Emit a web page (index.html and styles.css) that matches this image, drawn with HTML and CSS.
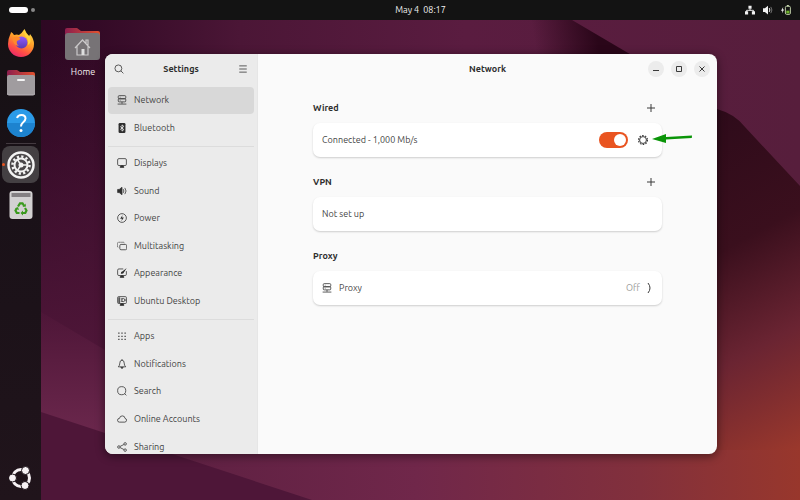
FILE: index.html
```html
<!DOCTYPE html>
<html lang="en">
<head>
    <meta charset="UTF-8">
    <meta name="viewport" content="width=device-width, initial-scale=1.0">
    <title>Settings</title>
    <link rel="stylesheet" href="styles.css">
</head>
<body>

    <!-- wallpaper -->
    <svg class="wallpaper" viewBox="0 0 800 500" preserveAspectRatio="none" aria-hidden="true">
        <defs>
            <linearGradient id="base" x1="0" y1="0" x2="1" y2="0">
                <stop offset="0" stop-color="#2a0620"/>
                <stop offset=".12" stop-color="#330a26"/>
                <stop offset=".3" stop-color="#4b1636"/>
                <stop offset=".58" stop-color="#5a1c40"/>
                <stop offset="1" stop-color="#571e3c"/>
            </linearGradient>
            <linearGradient id="left" x1="0" y1="0" x2="0" y2="1">
                <stop offset=".1" stop-color="#4e1638" stop-opacity="0"/>
                <stop offset=".7" stop-color="#4e1638"/>
            </linearGradient>
            <linearGradient id="fold" x1="0" y1="0" x2="0" y2="1">
                <stop offset="0" stop-color="#561a3d" stop-opacity=".3"/>
                <stop offset=".4" stop-color="#5a1d40"/>
                <stop offset="1" stop-color="#6a274c"/>
            </linearGradient>
            <linearGradient id="bottom" x1="0" y1="0" x2="1" y2="0">
                <stop offset="0" stop-color="#5d2042"/>
                <stop offset=".4" stop-color="#70274a"/>
                <stop offset=".75" stop-color="#82303c"/>
                <stop offset="1" stop-color="#98372c"/>
            </linearGradient>
            <linearGradient id="right" x1="0" y1="0" x2=".15" y2="1">
                <stop offset="0" stop-color="#2c0a1a"/>
                <stop offset=".42" stop-color="#3a0f1d"/>
                <stop offset=".7" stop-color="#6a2432"/>
                <stop offset="1" stop-color="#9a382c"/>
            </linearGradient>
            <linearGradient id="shade" gradientUnits="userSpaceOnUse" x1="535" y1="45" x2="597" y2="35">
                <stop offset="0" stop-color="#2a0619" stop-opacity="0"/>
                <stop offset="1" stop-color="#2a0619"/>
            </linearGradient>
        </defs>
        <rect width="800" height="500" fill="url(#base)"/>
        <rect width="300" height="500" fill="url(#left)"/>
        <path d="M41 312L105 350V433L41 412Z" fill="url(#fold)"/>
        <path d="M520 20H572L640 60H520Z" fill="url(#shade)"/>
        <path d="M690 95L717 109Q735 114 745 127L800 186V500H690Z" fill="url(#right)"/>
        <path d="M160 450L312 500H800V450Z" fill="url(#bottom)"/>
    </svg>

    <!-- top bar -->
    <header class="topbar">
        <div class="workspaces"><span class="pill"></span><span class="dot"></span></div>
        <time class="clock">May 4&nbsp; 08:17</time>
        <div class="tray">
            <svg viewBox="0 0 16 16"><path d="M5.500 1h5v5h-5zM0 10h5v5H0zM11 10h5v5h-5z" fill="currentColor"/><path d="M8 6v3M2.500 11V8.500h11V11" fill="none" stroke="currentColor" stroke-width="1.500"/></svg>
            <svg viewBox="0 0 16 16"><path d="M0 5h3l5-4v14l-5-4H0z" fill="currentColor"/><path d="M10 5q2 3 0 6" fill="none" stroke="currentColor" stroke-width="1.600"/><path d="M12.500 3q3.500 5 0 10" fill="none" stroke="#777" stroke-width="1.500"/></svg>
            <svg viewBox="0 0 16 16"><path d="M3.500 3L0 9h2.200L1.500 13 5 7H3z" fill="currentColor"/><rect x="7" y="2" width="8" height="13" rx="2" fill="none" stroke="#c7d8ae" stroke-width="1.500"/><path d="M9.500 0h3v2h-3z" fill="#c7d8ae"/><path d="M8.500 9h5v4.500h-5z" fill="#6fb52c"/></svg>
        </div>
    </header>

    <!-- dock -->
    <nav class="dock" aria-label="Dock">
        <button class="dock-item" aria-label="Firefox">
            <svg viewBox="0 0 28 28">
                <defs>
                    <linearGradient id="ff" x1=".8" y1="0" x2=".3" y2="1"><stop offset="0" stop-color="#ffe24a"/><stop offset=".45" stop-color="#ff9a28"/><stop offset=".75" stop-color="#ff4e45"/><stop offset="1" stop-color="#e9286c"/></linearGradient>
                    <linearGradient id="ffb" x1="0" y1="0" x2="0" y2="1"><stop offset="0" stop-color="#9059ff"/><stop offset="1" stop-color="#5b3bb0"/></linearGradient>
                </defs>
                <path d="M3 6q1-2 1-3 2 1 3 3 3-1 5 0Q15 4 17.500 0 19 4 22 7q1-1 1-2 4 5 4 10A13 13 0 0 1 1 15Q1 10 3 6z" fill="url(#ff)"/>
                <circle cx="14.500" cy="13.500" r="6" fill="url(#ffb)"/>
                <path d="M5 9q5-3 8 0 1 1-1 2l-2 1q-1 3 2 5-6-1-7-8z" fill="#ff8a2b"/>
                <path d="M17 1q0 5 3 8 2 3 1 7 4-3 2-8-4-3-6-7z" fill="#ffd43a"/>
            </svg>
        </button>
        <button class="dock-item" aria-label="Files">
            <svg viewBox="0 0 28 28">
                <defs><linearGradient id="fold-top" x1="0" y1="0" x2="1" y2="0"><stop offset="0" stop-color="#8c1e4e"/><stop offset="1" stop-color="#e2512e"/></linearGradient></defs>
                <path d="M0 3q0-2 2-2h8l3 2h13q2 0 2 2v8H0z" fill="url(#fold-top)"/>
                <rect y="6" width="28" height="20" rx="2" fill="#a09c9f"/>
                <path d="M0 24q0 2 2 2h24q2 0 2-2" fill="none" stroke="#bbb6ba"/>
                <rect x="10" y="10" width="8" height="2" rx="1" fill="#f5f5f5"/>
            </svg>
        </button>
        <button class="dock-item" aria-label="Help">
            <svg viewBox="0 0 28 28">
                <circle cx="14" cy="14" r="14" fill="#2b9be8"/>
                <path d="M0 14a14 14 0 0 0 28 0z" fill="#1d83cf"/>
                <path d="M10 9q1-3 4.500-3 4 0 4 3.500 0 2-2.500 4-2 1.500-2 4" fill="none" stroke="#fff" stroke-width="2"/>
                <circle cx="14" cy="21.500" r="1.500" fill="#fff"/>
            </svg>
        </button>
        <hr class="dock-line">
        <button class="dock-item running" aria-label="Settings">
            <svg viewBox="0 0 28 28">
                <circle cx="14" cy="14" r="12.500" fill="#4b484a" stroke="#f3f3f3" stroke-width="2.500"/>
                <circle cx="14" cy="14" r="8.500" fill="none" stroke="#f3f3f3" stroke-width="2.500" stroke-dasharray="2.200 2.250"/>
                <circle cx="14" cy="14" r="6.500" fill="none" stroke="#f3f3f3" stroke-width="2"/>
                <path d="M14 14h7M14 14l-4-6M14 14l-4 6" stroke="#f3f3f3" stroke-width="1.500"/>
                <circle cx="14" cy="14" r="2.500" fill="#f3f3f3"/>
            </svg>
        </button>
        <button class="dock-item" aria-label="Trash">
            <svg viewBox="0 0 28 28">
                <rect x="2.500" width="23" height="28" rx="3" fill="#d3d1d2"/>
                <path d="M4.500 2h19v4h-19z" fill="#848083"/>
                <g fill="none" stroke="#3a9a1e" stroke-width="2.200">
                    <path d="M11 15.500l2-3.200h2.500l1.500 2.500"/>
                    <path d="M18 17l1.500 2.500-1.200 2.500H15.500"/>
                    <path d="M12.500 22H9.800l-1.300-2.500L10 17"/>
                </g>
                <path d="M15.500 16l3.500-.5-.5-3zM16 19.500L13.500 22l2.500 2.500zM8 17.500l3-1.500 1 3z" fill="#3a9a1e"/>
            </svg>
        </button>
        <button class="dock-item apps" aria-label="Show apps">
            <svg viewBox="0 0 24 24">
                <circle cx="12" cy="12" r="8.500" fill="none" stroke="#f7f2f5" stroke-width="3"/>
                <g fill="#f7f2f5" stroke="#1f151b" stroke-width="1"><circle cx="3.500" cy="12" r="4"/><circle cx="16.500" cy="4.500" r="4"/><circle cx="16" cy="19.500" r="4"/></g>
            </svg>
        </button>
    </nav>

    <main class="desktop">
        <a class="shortcut" href="#home">
            <svg viewBox="0 0 36 34">
                <path d="M0 3q0-2 2-2h10l4 3h17q2 0 2 2v8H0z" fill="url(#fold-top)"/>
                <rect y="6" width="35" height="27" rx="3" fill="#777376"/>
                <path d="M10 21l7.500-8 7.500 8M12 19v9h11v-9M21 16v-3h2v5" fill="none" stroke="#cbc9ca" stroke-width="1.200"/>
                <path d="M16.500 22h3v6h-3z" fill="#dedede"/>
            </svg>
            <span>Home</span>
        </a>

        <!-- settings window -->
        <div class="window">
            <aside class="sidebar">
                <div class="sidebar-head">
                    <button class="icon-btn" aria-label="Search settings"><svg viewBox="0 0 16 16"><circle cx="7" cy="7" r="5.500"/><path d="M11 11l4 4"/></svg></button>
                    <h1>Settings</h1>
                    <button class="icon-btn" aria-label="Menu"><svg viewBox="0 0 16 16"><path d="M2 3h12M2 8h12M2 13h12"/></svg></button>
                </div>
                <nav aria-label="Settings panels">
                    <div class="group two">
                        <a class="item active" href="#network"><svg viewBox="0 0 16 16"><rect x="2" y="1" width="12" height="5" rx="1.500"/><rect x="2" y="6" width="12" height="5" rx="1.500"/><path d="M4.500 3.500h1M4.500 8.500h1M8 11v3M1 14.500h14"/></svg>Network</a>
                        <a class="item" href="#bluetooth"><svg viewBox="0 0 16 16"><rect x="2.500" y="0" width="11" height="16" rx="2" fill="#2e2e2e" stroke="none"/><path d="M5 5.500l6 5-3 2.500V3l3 2.500-6 5" stroke="#fff" stroke-width="1.200"/></svg>Bluetooth</a>
                    </div>
                    <div class="group six">
                        <a class="item" href="#displays"><svg viewBox="0 0 16 16"><rect x="1" y="1" width="14" height="11" rx="2"/><path d="M5 15q0-3 3-3t3 3z" fill="#2e2e2e"/></svg>Displays</a>
                        <a class="item" href="#sound"><svg viewBox="0 0 16 16"><path d="M1 5.500h2.500L8 2v12l-4.500-3.500H1z" fill="#2e2e2e"/><path d="M10 5q2 3 0 6M12.500 3q4 5 0 10"/></svg>Sound</a>
                        <a class="item" href="#power"><svg viewBox="0 0 16 16"><circle cx="8" cy="8" r="7"/><path d="M9 3L5 9h3l-1 4 4-6H8z" fill="#2e2e2e" stroke="none"/></svg>Power</a>
                        <a class="item" href="#multitasking"><svg viewBox="0 0 16 16"><rect x="4.500" y="5.500" width="11" height="8.500" rx="2"/><path d="M2 10Q.7 10 .7 8V4q0-2 2-2h7q2 0 2 1.500" stroke-dasharray="2 1"/></svg>Multitasking</a>
                        <a class="item" href="#appearance"><svg viewBox="0 0 16 16"><path d="M10 1.500H3q-2 0-2 2V10q0 2 2 2h10q2 0 2-2V5"/><path d="M5 15q0-3 3-3t3 3z" fill="#2e2e2e"/><path d="M15.500 0L9 5q-3 0-3 4 4 1 5-2z" fill="#2e2e2e" stroke="none"/></svg>Appearance</a>
                        <a class="item" href="#ubuntu-desktop"><svg viewBox="0 0 16 16"><rect x="1" y="1" width="14" height="11" rx="1.500"/><path d="M2 2h3v9H2z" fill="#555" stroke="none"/><path d="M5 15q0-3 3-3t3 3z" fill="#2e2e2e"/><circle cx="10" cy="6.500" r="2.500"/><path d="M6 4.500h3M6 8.500h3M12.500 6.500H15"/></svg>Ubuntu Desktop</a>
                    </div>
                    <div class="group five">
                        <a class="item" href="#apps"><svg viewBox="0 0 16 16"><path d="M2 3.500h2M7 3.500h2M12 3.500h2M2 8.500h2M7 8.500h2M12 8.500h2M2 13.500h2M7 13.500h2M12 13.500h2" stroke-width="2"/></svg>Apps</a>
                        <a class="item" href="#notifications"><svg viewBox="0 0 16 16"><path d="M2 12.500q2.500-2 2.500-6Q4.500 2 8 2t3.500 4.500q0 4 2.500 6zM8 0v2"/><path d="M6 13.500q2 3 4 0z" fill="#2e2e2e"/></svg>Notifications</a>
                        <a class="item" href="#search"><svg viewBox="0 0 16 16"><circle cx="7.500" cy="7.500" r="6.500"/><path d="M12 12l3 3"/></svg>Search</a>
                        <a class="item" href="#online-accounts"><svg viewBox="0 0 16 16"><path d="M4 13Q.8 13 .8 10T4 7q.5-4 4.500-4t4.300 4q2.500.5 2.500 3t-2.800 3z"/></svg>Online Accounts</a>
                        <a class="item" href="#sharing"><svg viewBox="0 0 16 16"><circle cx="3" cy="8" r="2"/><circle cx="13" cy="3" r="2"/><circle cx="13" cy="13" r="2"/><path d="M5 7l6-3M5 9l6 3"/></svg>Sharing</a>
                    </div>
                </nav>
            </aside>

            <section class="panel">
                <div class="panel-head">
                    <h1>Network</h1>
                    <div class="controls">
                        <button aria-label="Minimize"><svg viewBox="0 0 8 8"><path d="M1 5.500h6"/></svg></button>
                        <button aria-label="Maximize"><svg viewBox="0 0 8 8"><path d="M1.500 1.500h5v5h-5z"/></svg></button>
                        <button aria-label="Close"><svg viewBox="0 0 8 8"><path d="M1.500 1.500l5 5M6.500 1.500l-5 5"/></svg></button>
                    </div>
                </div>

                <div class="content">
                    <div class="section-head">
                        <h2>Wired</h2>
                        <button class="add" aria-label="Add wired connection"><svg viewBox="0 0 8 8"><path d="M4 0v8M0 4h8"/></svg></button>
                    </div>
                    <div class="card">
                        <label for="wired">Connected - 1,000 Mb/s</label>
                        <input class="switch" type="checkbox" id="wired" checked>
                        <button class="gear" aria-label="Wired options">
                            <svg viewBox="0 0 16 16"><circle cx="8" cy="8" r="5.500" stroke-width="1.600"/><circle cx="8" cy="8" r="7.200" stroke-width="1.800" stroke-dasharray="2.500 2.020"/></svg>
                            <svg class="arrow" viewBox="0 0 40 10" aria-hidden="true"><path d="M0 6L14 1v3l26-1.500-.2 2.500L14 6.500V10z" fill="#0a9508" stroke="none"/></svg>
                        </button>
                    </div>

                    <div class="section-head">
                        <h2>VPN</h2>
                        <button class="add" aria-label="Add VPN"><svg viewBox="0 0 8 8"><path d="M4 0v8M0 4h8"/></svg></button>
                    </div>
                    <div class="card">Not set up</div>

                    <div class="section-head">
                        <h2>Proxy</h2>
                    </div>
                    <button class="card">
                        <svg viewBox="0 0 16 16"><rect x="2" y="1" width="12" height="5" rx="1.500"/><rect x="2" y="6" width="12" height="5" rx="1.500"/><path d="M4.500 3.500h1M4.500 8.500h1M8 11v3M1 14.500h14"/></svg>
                        <span>Proxy</span>
                        <span class="state">Off</span>
                        <svg class="chevron" viewBox="0 0 6 10"><path d="M1 0q4 5 0 10"/></svg>
                    </button>
                </div>
            </section>
        </div>
    </main>

</body>
</html>
```
FILE: styles.css
```css
* {
    box-sizing: border-box;
}
body {
    margin: 0;
    min-height: 100vh;
    display: grid;
    grid-template: 20px 1fr / 41px 1fr;
    font-family: Ubuntu, "Noto Sans", sans-serif;
    font-size: 9px;
    line-height: 12px;
    color: #444;
    background: #4e1638;
    overflow: hidden;
}
button {
    font: inherit;
    color: inherit;
    padding: 0;
    border: none;
    background: none;
    cursor: pointer;
}
a {
    color: inherit;
    text-decoration: none;
}
h1, h2 {
    margin: 0;
    font-size: 9px;
    font-weight: bold;
    color: #2e2e2e;
}
svg {
    display: block;
    flex: none;
}
.wallpaper {
    position: absolute;
    inset: 0;
    width: 100%;
    height: 100%;
    z-index: -1;
}

/* top bar */
.topbar {
    grid-column: 1 / 3;
    display: grid;
    grid-template-columns: 41px 1fr auto 1fr;
    align-items: center;
    background: #131313;
    color: #f2f2f2;
}
.workspaces {
    display: flex;
    align-items: center;
    gap: 3px;
    padding-left: 9px;
}
.pill {
    width: 19px;
    height: 6px;
    border-radius: 3px;
    background: #fff;
}
.dot {
    width: 4px;
    height: 4px;
    border-radius: 50%;
    background: #888;
}
.clock {
    grid-column: 3;
}
.tray {
    display: flex;
    justify-content: flex-end;
    gap: 8px;
    padding-right: 9px;
}
.tray svg {
    width: 10px;
    height: 10px;
}

/* dock */
.dock {
    display: flex;
    flex-direction: column;
    align-items: center;
    gap: 3px;
    padding: 4px 0;
    background: linear-gradient(#161114, #1a1118 40%, #20141b);
}
.dock-item {
    position: relative;
    width: 37px;
    height: 37px;
    display: grid;
    place-items: center;
    border-radius: 8px;
}
.dock-item svg {
    width: 28px;
    height: 28px;
}
.dock-item.running {
    background: #444043;
}
.running::before {
    content: "";
    position: absolute;
    left: 0;
    width: 3px;
    height: 3px;
    border-radius: 50%;
    background: #e95420;
}
.dock-line {
    width: 30px;
    height: 1px;
    margin: -1px 0;
    border: none;
    background: #433a40;
}
.dock-item.apps {
    margin-top: auto;
}
.dock-item.apps svg {
    width: 24px;
    height: 24px;
}

/* desktop */
.desktop {
    position: relative;
}
.shortcut {
    width: 84px;
    padding-top: 7px;
    display: flex;
    flex-direction: column;
    align-items: center;
    gap: 5px;
    color: #f4eef2;
}
.shortcut svg {
    width: 36px;
    height: 34px;
}
.window {
    position: absolute;
    inset: 34px 83px 46px 64px;
    display: grid;
    grid-template-columns: 153px 1fr;
    border-radius: 8px;
    overflow: hidden;
    background: #fafafa;
    box-shadow: 0 2px 8px 1px rgba(0, 0, 0, 0.4);
}
.window svg {
    width: 10px;
    height: 10px;
    fill: none;
    stroke: #3a3a3a;
    stroke-width: 1.3;
}

/* sidebar */
.sidebar {
    overflow: hidden;
    background: #ebebeb;
    border-right: 1px solid #e6e6e6;
}
.sidebar-head {
    height: 30px;
    margin-bottom: 3px;
    padding: 0 8px;
    display: flex;
    justify-content: space-between;
    align-items: center;
}
.icon-btn {
    width: 12px;
    height: 12px;
    display: grid;
    place-items: center;
}
.group {
    display: grid;
    grid-auto-rows: 1fr;
    margin: 0 3px;
}
.group + .group {
    margin-top: 4px;
    padding-top: 3px;
    border-top: 1px solid #dcdcdc;
}
.two {
    height: 55px;
}
.six {
    height: 169px;
}
.five {
    height: 142px;
}
.item {
    display: flex;
    align-items: center;
    gap: 7px;
    margin-bottom: 1px;
    padding: 0 9px;
    border-radius: 4px;
}
.item:hover {
    background: #e0e0e0;
}
.item.active {
    background: #d8d8d8;
}

/* panel */
.panel-head {
    height: 30px;
    padding: 0 7px;
    display: grid;
    grid-template-columns: 1fr auto 1fr;
    align-items: center;
}
.panel-head h1 {
    grid-column: 2;
}
.controls {
    display: flex;
    justify-content: flex-end;
    gap: 7px;
}
.controls button {
    width: 16px;
    height: 16px;
    display: grid;
    place-items: center;
    border-radius: 50%;
    background: #ececec;
}
.window .controls svg, .window .add svg {
    width: 8px;
    height: 8px;
    stroke-width: 1;
}
.content {
    width: 76%;
    margin: 0 auto;
    padding-top: 9px;
}
.section-head {
    height: 30px;
    display: flex;
    justify-content: space-between;
    align-items: center;
}
.add {
    width: 16px;
    height: 16px;
    margin-right: 3px;
    display: grid;
    place-items: center;
}
.card {
    width: 100%;
    height: 34px;
    margin-bottom: 10px;
    padding: 0 9px;
    display: flex;
    align-items: center;
    gap: 7px;
    border-radius: 7px;
    background: #fff;
    box-shadow: 0 1px 2px rgba(0, 0, 0, 0.18);
}
.switch {
    appearance: none;
    width: 29px;
    height: 16px;
    margin: 0 0 0 auto;
    padding: 2px;
    display: flex;
    border-radius: 8px;
    background: #c8c8c8;
    cursor: pointer;
}
.switch::before {
    content: "";
    width: 12px;
    height: 12px;
    border-radius: 50%;
    background: #fff;
}
.switch:checked {
    justify-content: flex-end;
    background: #e95420;
}
.gear {
    position: relative;
    width: 16px;
    height: 16px;
    margin-right: 2px;
    display: grid;
    place-items: center;
}
.window .arrow {
    position: absolute;
    left: 17px;
    top: 1px;
    width: 40px;
    height: 10px;
}
.state {
    margin-left: auto;
    color: #999;
}
.window .chevron {
    width: 6px;
    stroke-width: 1;
}
```
